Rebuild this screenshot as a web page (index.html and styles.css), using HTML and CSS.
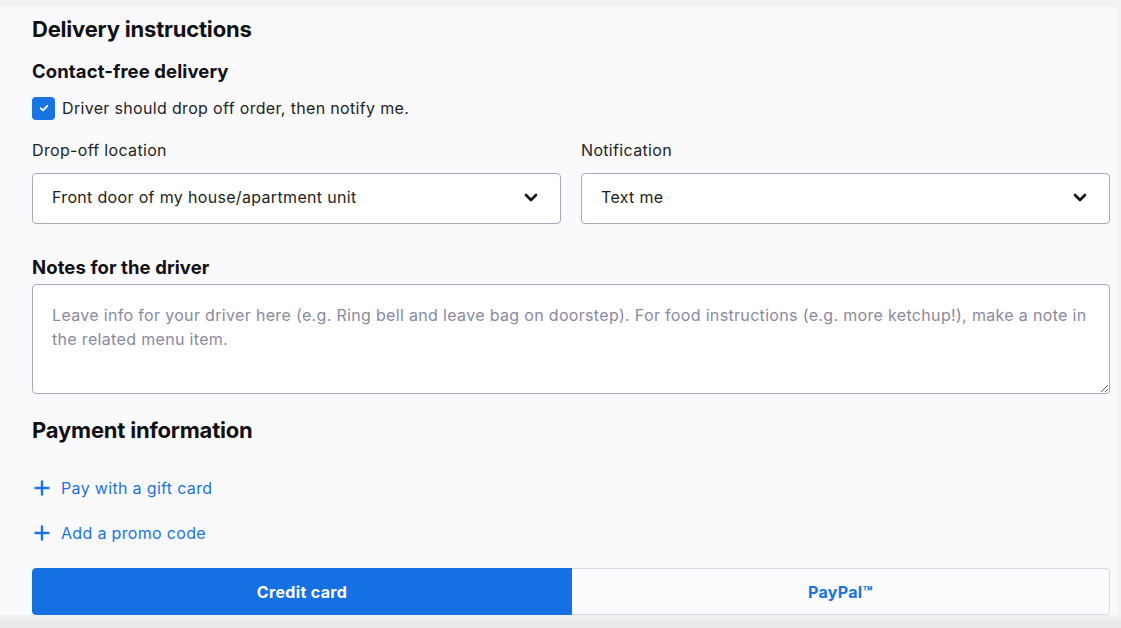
FILE: index.html
```html
<!DOCTYPE html>
<html lang="en">
<head>
<meta charset="utf-8">
<title>Delivery instructions</title>
<link rel="stylesheet" href="styles.css">
</head>
<body>
<div class="page">
  <h1 class="title">Delivery instructions</h1>
  <h2 class="subtitle first">Contact-free delivery</h2>
  <label class="check-row">
    <span class="checkbox">
      <svg width="12" height="12" viewBox="0 0 12 12"><path d="M2.6 6.2 L5 8.4 L9.4 3.8" fill="none" stroke="#fff" stroke-width="1.8" stroke-linecap="round" stroke-linejoin="round"/></svg>
    </span>
    <span>Driver should drop off order, then notify me.</span>
  </label>
  <div class="field-grid">
    <div class="field">
      <div class="field-label">Drop-off location</div>
      <div class="select">
        <span>Front door of my house/apartment unit</span>
        <svg class="chev" width="14" height="9" viewBox="0 0 14 9"><path d="M2 2 L7 7 L12 2" fill="none" stroke="#111" stroke-width="2.6" stroke-linecap="round" stroke-linejoin="round"/></svg>
      </div>
    </div>
    <div class="field">
      <div class="field-label">Notification</div>
      <div class="select">
        <span>Text me</span>
        <svg class="chev" width="14" height="9" viewBox="0 0 14 9"><path d="M2 2 L7 7 L12 2" fill="none" stroke="#111" stroke-width="2.6" stroke-linecap="round" stroke-linejoin="round"/></svg>
      </div>
    </div>
  </div>
  <h2 class="subtitle notes-title">Notes for the driver</h2>
  <textarea class="notes" placeholder="Leave info for your driver here (e.g. Ring bell and leave bag on doorstep). For food instructions (e.g. more ketchup!), make a note in&#10;the related menu item."></textarea>
  <h1 class="title pay-title">Payment information</h1>
  <a class="link-row first-link" href="#">
    <svg width="16" height="16" viewBox="0 0 16 16"><path d="M8 1.5 V14.5 M1.5 8 H14.5" stroke="#1a73e3" stroke-width="2.4" stroke-linecap="round"/></svg>
    <span>Pay with a gift card</span>
  </a>
  <a class="link-row second-link" href="#">
    <svg width="16" height="16" viewBox="0 0 16 16"><path d="M8 1.5 V14.5 M1.5 8 H14.5" stroke="#1a73e3" stroke-width="2.4" stroke-linecap="round"/></svg>
    <span>Add a promo code</span>
  </a>
  <div class="tabs">
    <div class="tab active">Credit card</div>
    <div class="tab">PayPal™</div>
  </div>
</div>
<div class="bottom-shade"></div>
</body>
</html>
```

FILE: styles.css
```css
* { box-sizing: border-box; }

html, body {
  margin: 0;
  padding: 0;
  background: #f3f3f5;
  font-family: Inter, "Noto Sans", Arial, sans-serif;
  color: #1b1b1f;
  overflow: hidden;
}

.page {
  margin-top: 7px;
  width: 1118px;
  background: #fafafc;
  padding: 0 8px 0 32px;
  height: 608px;
  display: flex;
  flex-direction: column;
  letter-spacing: 0.33px;
}

.title {
  margin: 8px 0 0;
  font-size: 22px;
  line-height: 28px;
  font-weight: 700;
  letter-spacing: -0.2px;
  color: #111114;
}

.subtitle {
  margin: 16px 0 0;
  font-size: 18.5px;
  line-height: 24px;
  font-weight: 700;
  letter-spacing: 0.1px;
  color: #111114;
}

.check-row {
  margin-top: 13px;
  display: flex;
  align-items: center;
  gap: 7px;
  font-size: 16px;
  line-height: 24px;
  color: #222226;
}

.checkbox {
  width: 23px;
  height: 23px;
  border-radius: 4px;
  background: #1a73e3;
  display: flex;
  align-items: center;
  justify-content: center;
  flex: none;
}

.field-grid {
  margin-top: 18px;
  display: grid;
  grid-template-columns: 1fr 1fr;
  column-gap: 20px;
}

.field-label {
  font-size: 16px;
  line-height: 24px;
  color: #222226;
}

.select {
  margin-top: 11px;
  height: 51px;
  background: #fff;
  border: 1px solid #a9a9bb;
  border-radius: 4px;
  padding: 0 22px 3px 19px;
  display: flex;
  align-items: center;
  justify-content: space-between;
  font-size: 16px;
  color: #1e1e22;
}

.chev { flex: none; margin-top: 1px; }

.notes-title { margin-top: 31px; }

.notes {
  display: block;
  margin-top: 5px;
  width: 100%;
  height: 110px;
  background: #fff;
  border: 1px solid #a9a9bb;
  border-radius: 4px;
  padding: 18px 18px 18px 19px;
  font-family: inherit;
  font-size: 16px;
  line-height: 24px;
  letter-spacing: 0.33px;
  color: #222226;
  resize: vertical;
  outline: none;
}

.notes::placeholder { color: #8a8a9e; }

.pay-title { margin-top: 22px; }

.link-row {
  display: flex;
  align-items: center;
  gap: 11px;
  padding-left: 2px;
  font-size: 16px;
  line-height: 24px;
  color: #1a73e3;
  text-decoration: none;
}

.first-link { margin-top: 32px; }
.second-link { margin-top: 21px; }

.tabs {
  margin-top: 23px;
  height: 47px;
  display: grid;
  grid-template-columns: 540px 1fr;
  border-radius: 4px;
  overflow: hidden;
}

.tab {
  display: flex;
  align-items: center;
  justify-content: center;
  font-size: 16px;
  font-weight: 700;
  color: #1a73e3;
  background: #fbfbfd;
  border: 1px solid #d9d9e6;
  border-left: none;
  border-radius: 0 4px 4px 0;
}

.tab.active {
  background: #1570e4;
  color: #fff;
  border: none;
  border-radius: 4px 0 0 4px;
}

.bottom-shade {
  position: absolute;
  left: 0;
  right: 0;
  top: 615px;
  height: 13px;
  background: linear-gradient(#f2f2f4, #e6e6e9);
}
```
